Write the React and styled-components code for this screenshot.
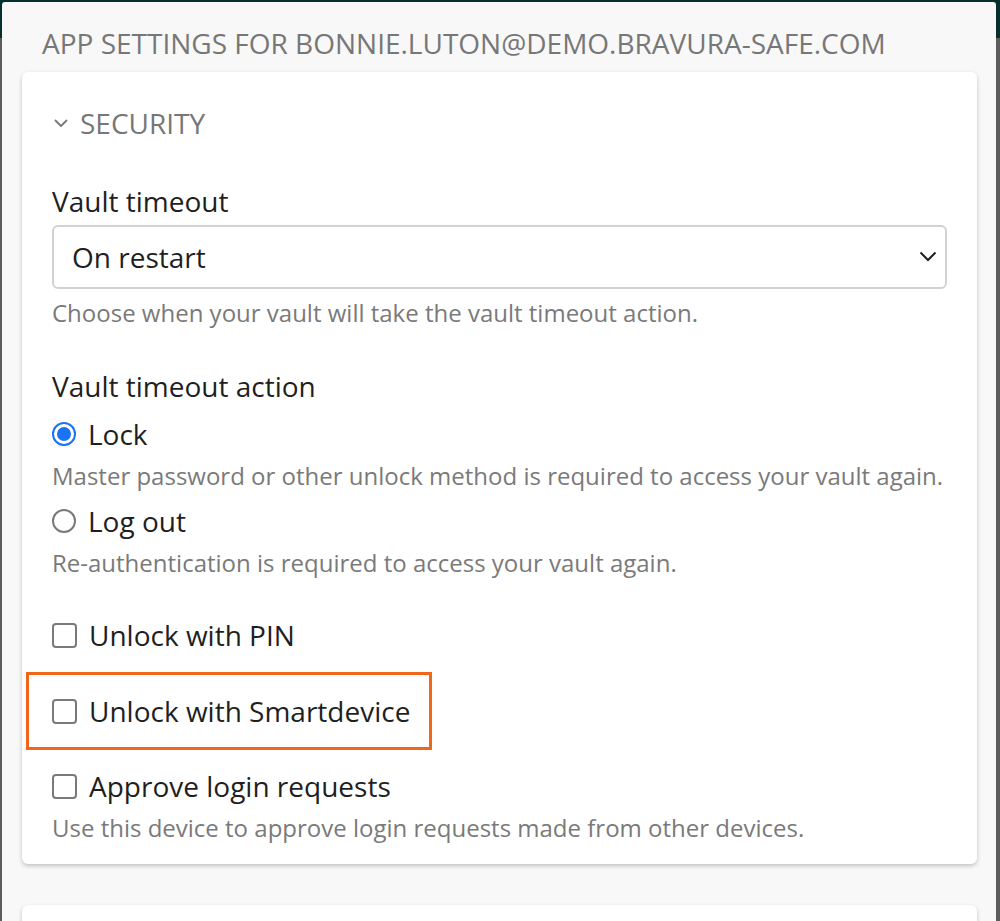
import React, { useState } from "react";
import styled, { createGlobalStyle } from "styled-components";

const GlobalStyle = createGlobalStyle`
  html, body {
    margin: 0;
    padding: 0;
    height: 100%;
    overflow: hidden;
  }
  body {
    font-family: "Open Sans", "Noto Sans", sans-serif;
    background: linear-gradient(#05302e 0, #05302e 38px, #5c5c5c 38px);
  }
`;

const Backdrop = styled.div`
  width: 1000px;
  height: 921px;
  padding: 2px 4px 0 2px;
  box-sizing: border-box;
`;

const Dialog = styled.div`
  height: 100%;
  background: #f8f8f8;
  border-radius: 3px 3px 0 0;
  padding: 0 19px 0 20px;
  box-sizing: border-box;
  overflow: hidden;
`;

const DialogTitle = styled.h1`
  margin: 0;
  padding: 23px 0 0 20px;
  height: 70px;
  box-sizing: border-box;
  font-size: 28px;
  line-height: 36px;
  font-weight: 400;
  color: #777;
  text-transform: uppercase;
  white-space: nowrap;
`;

const Card = styled.section`
  background: #fff;
  border-radius: 6px;
  box-shadow: 0 2px 4px rgba(0, 0, 0, 0.22);
  padding: 33px 30px 21px;
  margin-bottom: 41px;
  min-height: ${(p) => p.$minHeight || 0}px;
`;

const SectionToggle = styled.button`
  display: flex;
  align-items: center;
  gap: 11px;
  border: none;
  background: none;
  padding: 0 0 0 1px;
  font-family: inherit;
  font-size: 28px;
  line-height: 36px;
  color: #777;
  text-transform: uppercase;
  cursor: pointer;
`;

const Field = styled.div`
  margin-top: ${(p) => p.$top}px;
`;

const Label = styled.label`
  display: block;
  font-size: 28px;
  line-height: 36px;
  color: #1f1f1f;
`;

const SelectBox = styled.div`
  position: relative;
  margin-top: 6px;
`;

const Select = styled.select`
  width: 100%;
  height: 64px;
  appearance: none;
  border: 2px solid #d2d2d2;
  border-radius: 6px;
  background: #fff;
  padding: 0 18px;
  font-family: inherit;
  font-size: 28px;
  color: #1f1f1f;
  outline: none;
`;

const SelectArrow = styled.svg`
  position: absolute;
  right: 10px;
  top: 24px;
  pointer-events: none;
`;

const Hint = styled.p`
  margin: ${(p) => p.$top ?? 8}px 0 0;
  font-size: 24px;
  line-height: 31px;
  color: #7a7a7a;
`;

const OptionRow = styled.label`
  display: flex;
  align-items: center;
  gap: 12px;
  margin-top: ${(p) => p.$top}px;
  font-size: 28px;
  line-height: 36px;
  color: #1f1f1f;
  width: max-content;
  cursor: pointer;
`;

const Highlight = styled.div`
  position: relative;
  &::after {
    content: "";
    position: absolute;
    left: -26px;
    top: -21px;
    width: 406px;
    height: 78px;
    box-sizing: border-box;
    border: 3px solid #f2661b;
    pointer-events: none;
  }
`;

const RadioMark = styled.span`
  width: 24px;
  height: 24px;
  box-sizing: border-box;
  border-radius: 50%;
  border: 2px solid ${(p) => (p.$checked ? "#1a73f0" : "#7a7a7a")};
  display: flex;
  align-items: center;
  justify-content: center;
  flex-shrink: 0;
  &::after {
    content: "";
    width: 14px;
    height: 14px;
    border-radius: 50%;
    background: ${(p) => (p.$checked ? "#1a73f0" : "transparent")};
  }
`;

const CheckMark = styled.span`
  width: 25px;
  height: 25px;
  box-sizing: border-box;
  border: 2px solid #7a7a7a;
  border-radius: 4px;
  flex-shrink: 0;
  background: ${(p) => (p.$checked ? "#1a73f0" : "#fff")};
`;

const Chevron = ({ size = 16, stroke = "#777", width = 1.8 }) => (
  <svg width={size} height={size} viewBox="0 0 16 16" fill="none">
    <path d="M2.5 5.5l5.5 5.5 5.5-5.5" stroke={stroke} strokeWidth={width} strokeLinecap="round" strokeLinejoin="round" />
  </svg>
);

const timeoutActions = [
  {
    id: "lock",
    label: "Lock",
    hint: "Master password or other unlock method is required to access your vault again.",
  },
  {
    id: "logout",
    label: "Log out",
    hint: "Re-authentication is required to access your vault again.",
  },
];

const App = () => {
  const [action, setAction] = useState("lock");
  const [checks, setChecks] = useState({ pin: false, smart: false, approve: false });
  const toggle = (key) => setChecks((prev) => ({ ...prev, [key]: !prev[key] }));

  return (
    <Backdrop>
      <GlobalStyle />
      <Dialog>
        <DialogTitle>App settings for bonnie.luton@demo.bravura-safe.com</DialogTitle>
        <Card>
          <SectionToggle>
            <Chevron size={16} />
            Security
          </SectionToggle>

          <Field $top={42}>
            <Label>Vault timeout</Label>
            <SelectBox>
              <Select defaultValue="restart">
                <option value="restart">On restart</option>
              </Select>
              <SelectArrow width="18" height="14" viewBox="0 0 18 14">
                <path d="M1.5 3.5l7.5 7.5 7.5-7.5" fill="none" stroke="#1f1f1f" strokeWidth="2" />
              </SelectArrow>
            </SelectBox>
            <Hint $top={8}>Choose when your vault will take the vault timeout action.</Hint>
          </Field>

          <Field $top={40}>
            <Label>Vault timeout action</Label>
            {timeoutActions.map((a) => (
              <div key={a.id}>
                <OptionRow $top={12} onClick={() => setAction(a.id)}>
                  <RadioMark $checked={action === a.id} />
                  {a.label}
                </OptionRow>
                <Hint $top={8}>{a.hint}</Hint>
              </div>
            ))}
          </Field>

          <OptionRow $top={39} onClick={() => toggle("pin")}>
            <CheckMark $checked={checks.pin} />
            Unlock with PIN
          </OptionRow>

          <Field $top={40}>
            <Highlight>
              <OptionRow $top={0} onClick={() => toggle("smart")}>
                <CheckMark $checked={checks.smart} />
                Unlock with Smartdevice
              </OptionRow>
            </Highlight>
          </Field>

          <OptionRow $top={39} onClick={() => toggle("approve")}>
            <CheckMark $checked={checks.approve} />
            Approve login requests
          </OptionRow>
          <Hint $top={8}>Use this device to approve login requests made from other devices.</Hint>
        </Card>
        <Card $minHeight={80} />
      </Dialog>
    </Backdrop>
  );
};

export default App;
